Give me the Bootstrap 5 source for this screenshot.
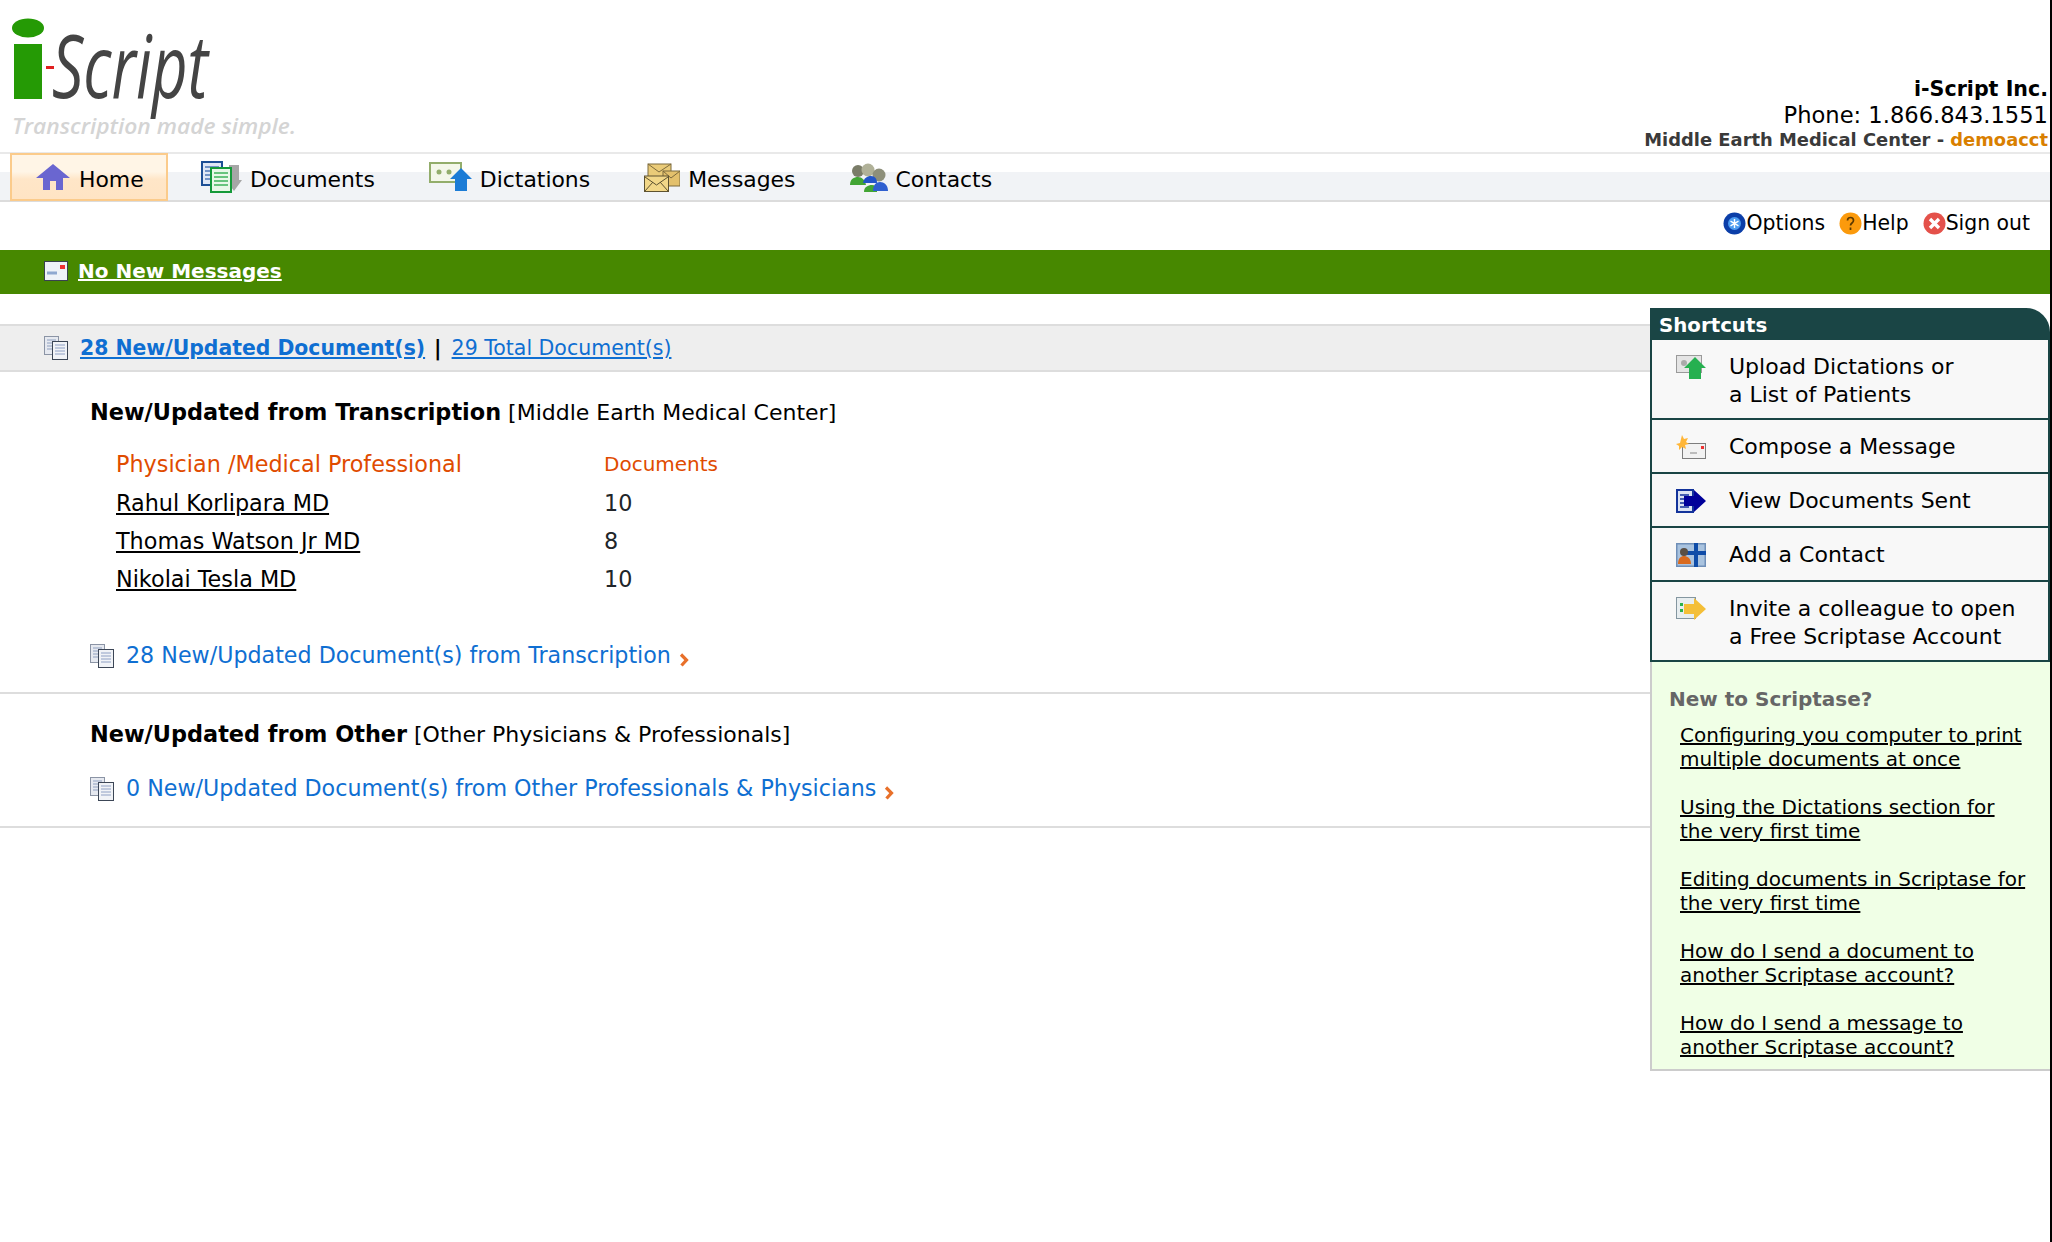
<!DOCTYPE html>
<html lang="en">
<head>
<meta charset="utf-8">
<title>i-Script</title>
<link rel="stylesheet" href="https://cdn.jsdelivr.net/npm/bootstrap@5.3.0/dist/css/bootstrap.min.css">
<style>
html,body{height:100%}
body{font-family:"DejaVu Sans",Verdana,sans-serif;color:#000;background:#fff;font-size:20px;border-right:2px solid #000;min-height:1242px;overflow:hidden}
.sc-head{height:152px}
.sc-logo{display:block;margin:0}
.sc-info{padding:77px 2px 0 0;text-align:right;line-height:25.5px}
.sc-co{font-weight:700;font-size:20.6px;color:#000}
.sc-ph{font-size:22.6px}
.sc-ac{font-weight:700;font-size:17.9px;color:#3a3a3a;margin-top:-1px}
.sc-ac b{color:#d97f00}
.sc-nav{height:50px;border-top:2px solid #e9e9e9;border-bottom:2px solid #dcdcdc;background:linear-gradient(#fff 0,#fff 38%,#f1f3f6 40%,#f1f3f6 100%);gap:54px;flex-wrap:nowrap}
.sc-nav .nav-link{display:flex;align-items:center;color:#000;font-size:21.9px;padding:6px 0 0;height:46px;white-space:nowrap}
.sc-nav .nav-link svg{margin-right:8px;margin-top:-6px}
.sc-nav .sc-home{background:linear-gradient(#fff5e6 0,#fff5e6 38%,#ffe6c8 55%,#ffe4c4 100%);border:2px solid #fbcb8b;width:158px;margin-left:10px;margin-right:-21px;padding:6px 0 0 23px;height:48px;margin-top:-1px}
.sc-util{height:48px;padding:0 20px 5px 0;gap:14px;font-size:20.4px}
.sc-util a{color:#000;text-decoration:none;display:flex;align-items:center}
.sc-green{height:44px;background:#478800;padding:0 0 2px 44px;gap:10px}
.sc-green a{color:#fff;font-weight:700;font-size:20px}
.sc-left{flex:1 1 auto;min-width:0;padding-top:30px}
.sc-bar{height:48px;background:#eee;border-top:2px solid #ddd;border-bottom:2px solid #ddd;padding:0 0 0 44px;font-size:20.5px}
.sc-bar a{color:#0f6fd2}
.sc-bar a.fw-bold{font-size:20.4px}
.sc-bar .sc-sep{font-weight:700;margin:0 10px 0 9px}
.sc-sec{border-bottom:2px solid #ddd;padding-left:90px}
.sc-first{height:322px}
.sc-second{height:134px}
.sc-sec h2{font-size:22px;font-weight:400;margin:0;line-height:28px;padding-top:26px}
.sc-sec h2 b{font-weight:700;font-size:22.4px}
.sc-tbl{margin:20px 0 0 26px;width:auto}
.sc-tbl td,.sc-tbl th{padding:0;height:38px;font-weight:400;font-size:22.3px;background:transparent;vertical-align:middle;border:0}
.sc-tbl th{padding-bottom:2px}
.sc-tbl th.sc-c2{padding-bottom:4px}
.sc-tbl .sc-c1{width:488px}
.sc-tbl th{color:#e04b00}
.sc-tbl th.sc-c2{font-size:20px}
.sc-tbl a{color:#000}
.sc-morerow{margin-top:40px}
.sc-morerow2{margin-top:23px}
.sc-more{color:#0f6fd2;font-size:22.2px;text-decoration:none}
.sc-side{flex:0 0 400px;width:400px;margin-top:14px}
.sc-shead{background:#1a4545;color:#fff;font-weight:700;font-size:19.8px;height:32px;border-top-right-radius:24px;padding-left:9px;line-height:35px;overflow:hidden}
.sc-list{border-radius:0;background:#f8f8f8}
.sc-list .list-group-item{background:#f8f8f8;border-width:0 2px 2px 2px;border-style:solid;border-color:#1a4545;border-radius:0;padding:0 0 0 24px;display:flex;font-size:22px;line-height:28px;color:#000;align-items:flex-start}
.sc-list .list-group-item span{margin-left:23px}
.sc-list svg{flex:none;margin-top:2px}
.sc-one{height:54px;padding-top:13px!important}
.sc-two{height:80px;padding-top:13px!important}
.sc-help{background:#f0ffe6;border-left:2px solid #ccc;border-bottom:2px solid #ccc;height:409px;padding:24px 0 0 17px}
.sc-help h3{color:#666;font-size:20px;font-weight:700;margin:0 0 11px;line-height:26px}
.sc-help ul{list-style:none;margin:0;padding:0 0 0 11px}
.sc-help li{line-height:24px;font-size:20px;margin-bottom:24px}
.sc-help a{color:#000}
</style>
</head>
<body>
<svg width="0" height="0" class="position-absolute">
 <defs>
  <symbol id="i-doc" viewBox="0 0 24 24">
   <rect x="0.5" y="0.5" width="14" height="18" fill="#e6e9f0" stroke="#8b94a5"/>
   <path d="M3 4h9M3 7h9M3 10h9M3 13h9" stroke="#8fa0bf"/>
   <rect x="8.5" y="5.5" width="15" height="18" fill="#f1f3f7" stroke="#3c4656"/>
   <path d="M11 9h10M11 12h10M11 15h10M11 18h10" stroke="#8fa0c4"/>
  </symbol>
  <symbol id="i-chev" viewBox="0 0 10 14">
   <path d="M2 1.5 L7.500 7 L2.500 12.500" fill="none" stroke="#e8702a" stroke-width="3.2"/>
  </symbol>
 </defs>
</svg>

<header class="sc-head d-flex justify-content-between">
 <svg class="sc-logo" width="310" height="150" viewBox="0 0 310 150">
  <ellipse cx="28" cy="28" rx="16" ry="9.5" fill="#259a05"/>
  <rect x="14" y="44" width="28" height="55" fill="#259a05"/>
  <rect x="46" y="66" width="8" height="3" fill="#e02020"/>
  <text x="52" y="98" font-family="Open Sans" font-style="italic" font-size="88" fill="#444" textLength="156" lengthAdjust="spacingAndGlyphs">Script</text>
  <text x="12" y="134" font-family="Open Sans" font-style="italic" font-weight="600" font-size="22" fill="#d4d4d4" textLength="284" lengthAdjust="spacingAndGlyphs">Transcription made simple.</text>
 </svg>
 <div class="sc-info">
  <div class="sc-co">i-Script Inc.</div>
  <div class="sc-ph">Phone: 1.866.843.1551</div>
  <div class="sc-ac">Middle Earth Medical Center - <b>demoacct</b></div>
 </div>
</header>

<ul class="nav sc-nav">
 <li class="nav-item"><a class="nav-link sc-home" href="#">
  <svg width="36" height="28" viewBox="0 0 36 28"><path d="M18 1 L35 15 H28 V27 H21 V18 H15 V27 H8 V15 H1 Z" fill="#6a66d0"/></svg>Home</a></li>
 <li class="nav-item"><a class="nav-link" href="#">
  <svg width="41" height="32" viewBox="0 0 41 32"><rect x="1" y="1" width="20" height="23" fill="#dfe7f5" stroke="#1d4f95" stroke-width="2"/><path d="M4 6h14M4 10h14M4 14h14M4 18h14" stroke="#4f78b8" stroke-width="1.5"/><path d="M28 4h10v15h3L33 30 25 19h3Z" fill="#a6a6a6"/><rect x="10" y="7" width="20" height="24" fill="#eaf8e8" stroke="#159a3a" stroke-width="2"/><path d="M13 12h14M13 16h14M13 20h14M13 24h14" stroke="#3fb35a" stroke-width="1.6"/></svg>Documents</a></li>
 <li class="nav-item"><a class="nav-link" href="#">
  <svg width="43" height="30" viewBox="0 0 43 30"><rect x="1" y="1" width="31" height="19" fill="#f4f7ea" stroke="#93ad6b" stroke-width="2"/><circle cx="10" cy="10" r="2.5" fill="#93ad6b"/><circle cx="20" cy="10" r="2.5" fill="#93ad6b"/><path d="M32 6 L43 17 H38 V29 H26 V17 H21 Z" fill="#1c7cd6"/></svg>Dictations</a></li>
 <li class="nav-item"><a class="nav-link" href="#">
  <svg width="36" height="29" viewBox="0 0 36 29"><rect x="4" y="1" width="23" height="14" fill="#eacb78" stroke="#7d6a3c"/><path d="M4 1 15 9 27 1" fill="none" stroke="#7d6a3c"/><rect x="19" y="8" width="17" height="15" fill="#e3c06c" stroke="#7d6a3c"/><path d="M19 8l8 7 9-7" fill="none" stroke="#7d6a3c"/><rect x="0.5" y="13" width="24" height="15.500" fill="#f2d788" stroke="#5e5230"/><path d="M1 14 12.500 22 24 14M1 28 9 19M24 28 16 19" fill="none" stroke="#5e5230"/></svg>Messages</a></li>
 <li class="nav-item"><a class="nav-link" href="#">
  <svg width="38" height="29" viewBox="0 0 38 29"><circle cx="8" cy="8" r="6" fill="#7a7c68"/><circle cx="18" cy="7" r="6.500" fill="#b0b198"/><circle cx="29" cy="12" r="6.500" fill="#8d8f7a"/><path d="M0 22c0-6 4-8 8-8s7 3 8 8Z" fill="#42a534"/><path d="M13 20c1-5 4-7 8-7s6 3 6 7Z" fill="#2255c8"/><path d="M14 29c0-5 4-7 8-7 3 0 4 2 5 3v4Z" fill="#42a534"/><path d="M23 28c0-6 3-9 7-9s8 3 8 9Z" fill="#2f5fd0"/></svg>Contacts</a></li>
</ul>

<div class="sc-util d-flex justify-content-end align-items-center">
 <a href="#"><svg width="23" height="23" viewBox="0 0 23 23"><circle cx="11.500" cy="11.500" r="11" fill="#0b3ea8"/><circle cx="11.500" cy="11.500" r="6.500" fill="#4d9cf0"/><path d="M11.500 7v9M7.500 9.200l8 4.600M15.500 9.200l-8 4.600" stroke="#fff" stroke-width="1.400"/></svg>Options</a>
 <a href="#"><svg width="23" height="23" viewBox="0 0 23 23"><circle cx="11.500" cy="11.500" r="11" fill="#fb9a0c"/><path d="M8.500 8.500c0-4 6-4 6 0 0 2.500-3 2.500-3 5M11.500 15.500v2.500" fill="none" stroke="#5b3800" stroke-width="1.700"/></svg>Help</a>
 <a href="#"><svg width="23" height="23" viewBox="0 0 23 23"><circle cx="11.500" cy="11.500" r="11" fill="#e4514a"/><path d="M7 7l9 9M16 7l-9 9" stroke="#fff" stroke-width="3.400"/></svg>Sign out</a>
</div>

<div class="sc-green d-flex align-items-center">
 <svg width="24" height="20" viewBox="0 0 24 20"><rect x="0.500" y="0.500" width="23" height="19" fill="#eef2f8" stroke="#39424f"/><path d="M3 12h10" stroke="#8fa8d0" stroke-width="3"/><rect x="16" y="4" width="5" height="4" fill="#e33"/></svg>
 <a href="#">No New Messages</a>
</div>

<main class="d-flex align-items-start">
 <div class="sc-left">
  <div class="sc-bar d-flex align-items-center">
   <svg width="24" height="24" class="me-2"><use href="#i-doc"/></svg>
   <a href="#" class="fw-bold ms-1">28 New/Updated Document(s)</a><span class="sc-sep">|</span><a href="#">29 Total Document(s)</a>
  </div>
  <section class="sc-sec sc-first">
   <h2><b>New/Updated from Transcription</b> [Middle Earth Medical Center]</h2>
   <table class="table table-borderless sc-tbl">
    <thead><tr><th class="sc-c1">Physician /Medical Professional</th><th class="sc-c2">Documents</th></tr></thead>
    <tbody>
     <tr><td><a href="#">Rahul Korlipara MD</a></td><td>10</td></tr>
     <tr><td><a href="#">Thomas Watson Jr MD</a></td><td>8</td></tr>
     <tr><td><a href="#">Nikolai Tesla MD</a></td><td>10</td></tr>
    </tbody>
   </table>
   <div class="d-flex align-items-center sc-morerow">
    <svg width="24" height="24" class="me-2"><use href="#i-doc"/></svg>
    <a class="sc-more ms-1" href="#">28 New/Updated Document(s) from Transcription</a>
    <svg width="10" height="14" class="ms-2 mt-2"><use href="#i-chev"/></svg>
   </div>
  </section>
  <section class="sc-sec sc-second">
   <h2><b>New/Updated from Other</b> [Other Physicians &amp; Professionals]</h2>
   <div class="d-flex align-items-center sc-morerow2">
    <svg width="24" height="24" class="me-2"><use href="#i-doc"/></svg>
    <a class="sc-more ms-1" href="#">0 New/Updated Document(s) from Other Professionals &amp; Physicians</a>
    <svg width="10" height="14" class="ms-2 mt-2"><use href="#i-chev"/></svg>
   </div>
  </section>
 </div>

 <aside class="sc-side">
  <div class="sc-shead">Shortcuts</div>
  <div class="list-group sc-list">
   <a href="#" class="list-group-item sc-two">
    <svg width="30" height="24" viewBox="0 0 30 24"><rect x="0.500" y="0.500" width="25" height="17" fill="#e5e5e5" stroke="#9a9a9a"/><circle cx="8" cy="8" r="3" fill="#aaa"/><path d="M19 2 30 13H25V24H13V13H8Z" fill="#26b050"/></svg>
    <span>Upload Dictations or<br>a List of Patients</span></a>
   <a href="#" class="list-group-item sc-one">
    <svg width="30" height="24" viewBox="0 0 30 24"><rect x="6.500" y="8.500" width="23" height="15" fill="#f2f2f2" stroke="#7d7d7d"/><path d="M14 18h7" stroke="#aaa" stroke-width="1.500"/><rect x="25" y="11" width="3" height="3" fill="#e33"/><path d="M6 0l2 4 4-1-2 4 3 2-4 1 1 4-4-2-3 3 0-4-3-2 4-1Z" fill="#ffb638"/></svg>
    <span>Compose a Message</span></a>
   <a href="#" class="list-group-item sc-one">
    <svg width="30" height="24" viewBox="0 0 30 24"><rect x="1" y="1" width="16" height="22" fill="#dbe3f3" stroke="#13339b" stroke-width="2"/><path d="M4 6h9M4 10h9M4 14h9M4 18h9" stroke="#13339b" stroke-width="1.500"/><path d="M8 7h10V1l12 11-12 11v-6H8Z" fill="#00009a"/></svg>
    <span>View Documents Sent</span></a>
   <a href="#" class="list-group-item sc-one">
    <svg width="30" height="24" viewBox="0 0 30 24"><rect width="30" height="24" fill="#6f8fb8"/><rect x="1.500" y="1.500" width="27" height="21" fill="#a9c3df"/><rect x="18" y="0" width="4" height="24" fill="#0f4ca8"/><rect x="10" y="8" width="20" height="4" fill="#0f4ca8"/><circle cx="8" cy="9" r="4" fill="#5a4f45"/><path d="M2 21c0-6 3-8 6-8s7 2 7 8Z" fill="#d96a1f"/></svg>
    <span>Add a Contact</span></a>
   <a href="#" class="list-group-item sc-two">
    <svg width="30" height="24" viewBox="0 0 30 24"><rect x="0.500" y="0.500" width="19" height="21" fill="#e8eef0" stroke="#8496a0"/><rect x="4" y="6" width="3" height="3" fill="#2cb14a"/><rect x="4" y="12" width="3" height="3" fill="#2cb14a"/><path d="M8 7h10V1l12 11-12 11v-6H8Z" fill="#f4bf38"/></svg>
    <span>Invite a colleague to open<br>a Free Scriptase Account</span></a>
  </div>
  <div class="sc-help">
   <h3>New to Scriptase?</h3>
   <ul>
    <li><a href="#">Configuring you computer to print<br>multiple documents at once</a></li>
    <li><a href="#">Using the Dictations section for<br>the very first time</a></li>
    <li><a href="#">Editing documents in Scriptase for<br>the very first time</a></li>
    <li><a href="#">How do I send a document to<br>another Scriptase account?</a></li>
    <li><a href="#">How do I send a message to<br>another Scriptase account?</a></li>
   </ul>
  </div>
 </aside>
</main>
<script src="https://cdn.jsdelivr.net/npm/bootstrap@5.3.0/dist/js/bootstrap.bundle.min.js"></script>
</body>
</html>
